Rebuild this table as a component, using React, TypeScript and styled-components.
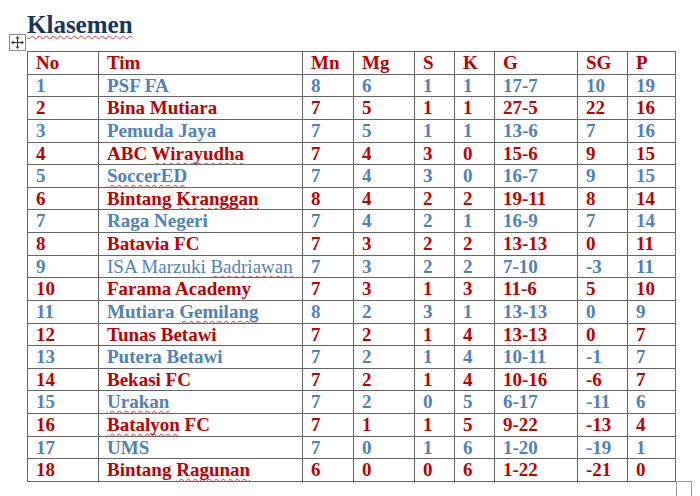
import React from 'react'
import styled, { createGlobalStyle } from 'styled-components'

const GlobalStyle = createGlobalStyle`
  body {
    margin: 0;
    background: #ffffff;
    font-family: "Liberation Serif", "DejaVu Serif", serif;
  }
`

const Page = styled.div`
  padding: 10px 0 0 27px;
  width: 700px;
  height: 496px;
  box-sizing: border-box;
  overflow: hidden;
`

const Title = styled.h1`
  margin: 0 0 11px;
  font-size: 25px;
  line-height: 30px;
  font-weight: bold;
  color: #17365d;
`

const Squiggle = styled.span`
  text-decoration: underline wavy #e0333a;
  text-decoration-thickness: 1px;
  text-underline-offset: 2px;
  text-decoration-skip-ink: none;
`

const TableWrap = styled.div`
  position: relative;
  width: 648px;
`

const Grid = styled.table`
  border-collapse: collapse;
  table-layout: fixed;
  width: 648px;
`

const Row = styled.tr<{ $tone: 'red' | 'blue' }>`
  height: 22.63px;
  color: ${(p) => (p.$tone === 'red' ? '#c00000' : '#4f81bd')};
`

const Cell = styled.td<{ $light?: boolean }>`
  border: 1px solid #666666;
  padding: 0 0 0 8px;
  font-size: 19px;
  line-height: 21.6px;
  font-weight: ${(p) => (p.$light ? 'normal' : 'bold')};
  white-space: nowrap;
  overflow: hidden;
`

const MoveHandle = styled.div`
  position: absolute;
  left: -18px;
  top: -17px;
  width: 15px;
  height: 15px;
  border: 1px solid #8c8c8c;
  background: #ffffff;
  display: flex;
  align-items: center;
  justify-content: center;
`

const ResizeHandle = styled.div`
  position: absolute;
  right: -17px;
  bottom: -15px;
  width: 14px;
  height: 14px;
  border: 1px solid #9a9a9a;
  background: #ffffff;
`

const widths = [71, 204, 51, 61, 40, 40, 83, 50, 48]

const headers = ['No', 'Tim', 'Mn', 'Mg', 'S', 'K', 'G', 'SG', 'P']

type Team = {
  name: React.ReactNode
  light?: boolean
  stats: string[]
}

const teams: Team[] = [
  { name: 'PSF FA', stats: ['8', '6', '1', '1', '17-7', '10', '19'] },
  { name: 'Bina Mutiara', stats: ['7', '5', '1', '1', '27-5', '22', '16'] },
  { name: 'Pemuda Jaya', stats: ['7', '5', '1', '1', '13-6', '7', '16'] },
  { name: <>ABC <Squiggle>Wirayudha</Squiggle></>, stats: ['7', '4', '3', '0', '15-6', '9', '15'] },
  { name: <Squiggle>SoccerED</Squiggle>, stats: ['7', '4', '3', '0', '16-7', '9', '15'] },
  { name: <>Bintang <Squiggle>Kranggan</Squiggle></>, stats: ['8', '4', '2', '2', '19-11', '8', '14'] },
  { name: 'Raga Negeri', stats: ['7', '4', '2', '1', '16-9', '7', '14'] },
  { name: 'Batavia FC', stats: ['7', '3', '2', '2', '13-13', '0', '11'] },
  { name: <>ISA Marzuki <Squiggle>Badriawan</Squiggle></>, light: true, stats: ['7', '3', '2', '2', '7-10', '-3', '11'] },
  { name: 'Farama Academy', stats: ['7', '3', '1', '3', '11-6', '5', '10'] },
  { name: <>Mutiara <Squiggle>Gemilang</Squiggle></>, stats: ['8', '2', '3', '1', '13-13', '0', '9'] },
  { name: 'Tunas Betawi', stats: ['7', '2', '1', '4', '13-13', '0', '7'] },
  { name: 'Putera Betawi', stats: ['7', '2', '1', '4', '10-11', '-1', '7'] },
  { name: 'Bekasi FC', stats: ['7', '2', '1', '4', '10-16', '-6', '7'] },
  { name: <Squiggle>Urakan</Squiggle>, stats: ['7', '2', '0', '5', '6-17', '-11', '6'] },
  { name: <><Squiggle>Batalyon</Squiggle> FC</>, stats: ['7', '1', '1', '5', '9-22', '-13', '4'] },
  { name: 'UMS', stats: ['7', '0', '1', '6', '1-20', '-19', '1'] },
  { name: <>Bintang <Squiggle>Ragunan</Squiggle></>, stats: ['6', '0', '0', '6', '1-22', '-21', '0'] },
]

const MoveIcon = () => (
  <svg width="13" height="13" viewBox="0 0 13 13" fill="#3a3a3a">
    <rect x="6" y="2" width="1" height="9" />
    <rect x="2" y="6" width="9" height="1" />
    <polygon points="6.5,0 4.5,2.5 8.5,2.5" />
    <polygon points="6.5,13 4.5,10.5 8.5,10.5" />
    <polygon points="0,6.5 2.5,4.5 2.5,8.5" />
    <polygon points="13,6.5 10.5,4.5 10.5,8.5" />
  </svg>
)

export default function App() {
  return (
    <>
      <GlobalStyle />
      <Page>
        <Title>
          <Squiggle>Klasemen</Squiggle>
        </Title>
        <TableWrap>
          <MoveHandle>
            <MoveIcon />
          </MoveHandle>
          <Grid>
            <colgroup>
              {widths.map((w, i) => (
                <col key={i} style={{ width: w }} />
              ))}
            </colgroup>
            <tbody>
              <Row $tone="red">
                {headers.map((h) => (
                  <Cell key={h}>{h}</Cell>
                ))}
              </Row>
              {teams.map((t, i) => (
                <Row key={i} $tone={i % 2 === 0 ? 'blue' : 'red'}>
                  <Cell>{i + 1}</Cell>
                  <Cell $light={t.light}>{t.name}</Cell>
                  {t.stats.map((s, j) => (
                    <Cell key={j}>{s}</Cell>
                  ))}
                </Row>
              ))}
            </tbody>
          </Grid>
          <ResizeHandle />
        </TableWrap>
      </Page>
    </>
  )
}
